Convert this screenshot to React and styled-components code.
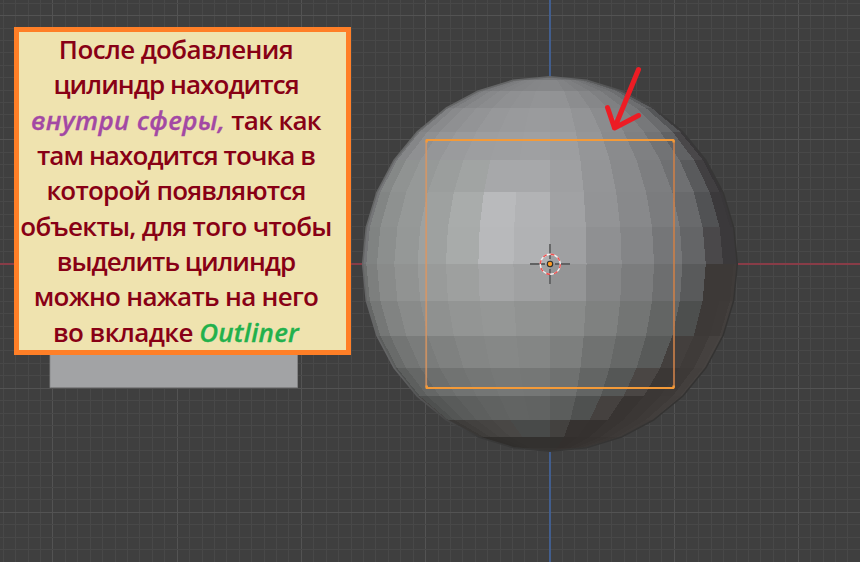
import React from "react";
import styled, { createGlobalStyle } from "styled-components";

const GlobalStyle = createGlobalStyle`
  *, *::before, *::after { box-sizing: border-box; }
  html, body { margin: 0; padding: 0; background: #3f3f3f; }
`;

const Viewport = styled.main`
  position: relative;
  width: 860px;
  height: 562px;
  padding: 27px 0 0 14px;
  overflow: hidden;
  background: #3f3f3f;
`;

const Scene = styled.svg`
  position: absolute;
  inset: 0;
  width: 860px;
  height: 562px;
  display: block;
`;

const NoteCard = styled.section`
  position: relative;
  display: flex;
  flex-direction: column;
  width: 337px;
  height: 328px;
  padding: 0 13px 0 0;
  border: 5px solid #ff7f27;
  background: #efe3af;
  color: #880015;
  font-family: "Open Sans", "Noto Sans", sans-serif;
  font-size: 26px;
  font-weight: 600;
`;

const NoteLine = styled.div`
  display: flex;
  justify-content: center;
  height: 35.5px;
  line-height: 34.6px;
  white-space: pre;
  letter-spacing: ${(p) => p.$tracking || 0}px;
`;

const Accent = styled.em`
  color: ${(p) => p.$color};
  font-style: italic;
  font-weight: 600;
  letter-spacing: ${(p) => p.$tracking || 0}px;
  -webkit-text-stroke: 0.3px currentColor;
`;

const CX = 550;
const CY = 264;
const R = 187.3;
const STEP = Math.PI / 16;

const SHADES = [
  "5f 66 6c 70 74 76 78 79 78 76 73 70 6c 66 5c 4e",
  "68 74 7a 7e 82 84 86 87 87 83 7f 7a 74 6d 60 50",
  "70 7a 82 88 8c 90 92 94 93 8d 87 80 78 6e 5f 4c",
  "74 82 8a 90 94 98 9a 9b 9a 94 8c 82 78 6b 56 40",
  "76 86 90 96 9b 9e 9f a0 9e 96 8b 80 73 62 48 38",
  "78 87 92 98 9d a3 a8 a8 a0 95 8a 7e 70 5a 40 36",
  "76 84 90 98 a0 ab ba b3 a2 94 89 7c 6a 52 3a 38",
  "74 82 8e 97 a0 aa b9 b2 a0 90 85 76 65 49 3a 3a",
  "6e 7e 8a 92 9a 9f a6 a1 95 86 7c 6e 5a 3a 3a 3c",
  "66 76 82 8a 90 94 96 92 8a 80 74 64 4e 3a 3b 40",
  "5c 6a 74 7b 80 85 87 85 7e 71 67 59 40 3c 42 44",
  "50 5e 66 6d 72 75 77 76 70 64 56 47 38 3a 40 43",
  "44 4f 55 5a 5e 61 63 62 5c 50 42 35 38 3b 3f 41",
  "34 38 3d 41 44 47 49 49 41 33 32 35 38 3a 3c 3e",
  "2d 2d 2e 2f 30 31 31 31 30 30 31 33 35 37 39 3a",
  "34 34 34 34 34 34 34 34 33 33 34 35 37 38 39 3a",
].map((row) => row.split(" ").map((v) => parseInt(v, 16)));

const faceColor = (v, row, col) => {
  if (row < 8) {
    if (v < 0x50) return `rgb(${v + 1},${v - 1},${v + 1})`;
    if (row >= 5 && col > 0 && col < 6) return `rgb(${v - 2},${v + 1},${v})`;
    return `rgb(${v - 1},${v},${v + 2})`;
  }
  if (v < 0x48 && row > 11 && col < 9) return `rgb(${v + 2},${v},${v - 2})`;
  if (v < 0x48) return `rgb(${v + 3},${v - 1},${v - 3})`;
  if (row === 8 && col > 5) return `rgb(${v - 1},${v},${v + 1})`;
  return `rgb(${v - 1},${v + 1},${v})`;
};

const vertex = (ring, seg) => {
  const polar = ring * STEP;
  const x = CX - R * Math.sin(polar) * Math.cos(seg * STEP);
  const y = CY - R * Math.cos(polar);
  return `${x.toFixed(2)},${y.toFixed(2)}`;
};

const faces = SHADES.flatMap((shades, row) =>
  shades.map((v, col) => ({
    key: `${row}-${col}`,
    points: [vertex(row, col), vertex(row, col + 1), vertex(row + 1, col + 1), vertex(row + 1, col)].join(" "),
    color: faceColor(v, row, col),
  }))
);

const silhouette = [
  ...Array.from({ length: 17 }, (_, i) => vertex(i, 0)),
  ...Array.from({ length: 17 }, (_, i) => vertex(16 - i, 16)),
].join(" ");

const GRID = 12.42;
const columns = Array.from({ length: 70 }, (_, i) => i - 44);
const rows = Array.from({ length: 46 }, (_, i) => i - 21);

function Grid() {
  const line = (i, vertical) => {
    const offset = vertical ? 0.7 : 0.5;
    const p = Math.round((vertical ? CX : CY) + i * GRID - offset) + 0.5;
    const major = i % 10 === 0;
    return (
      <line
        key={`${vertical ? "v" : "h"}${i}`}
        x1={vertical ? p : 0}
        x2={vertical ? p : 860}
        y1={vertical ? 0 : p}
        y2={vertical ? 562 : p}
        stroke={major ? "#535353" : "#484848"}
      />
    );
  };
  const minorFirst = (a, b) => (a % 10 === 0) - (b % 10 === 0);
  return (
    <g>
      {[...columns].sort(minorFirst).map((i) => line(i, true))}
      {[...rows].sort(minorFirst).map((i) => line(i, false))}
    </g>
  );
}

function Sphere() {
  return (
    <g>
      <g shapeRendering="crispEdges">
        {faces.map((f) => (
          <polygon key={f.key} points={f.points} fill={f.color} />
        ))}
      </g>
      <polygon points={silhouette} fill="none" stroke="url(#rim)" strokeWidth="1.6" strokeLinejoin="round" />
    </g>
  );
}

function CylinderOutline() {
  return (
    <g fill="none">
      <path d="M426.2 141V387" stroke="#dd965f" strokeWidth="1.8" opacity="0.8" />
      <path d="M674 141V387" stroke="#cb8049" strokeWidth="1.8" opacity="0.9" />
      <path d="M426.5 140H673.5M426.5 388H673.5" stroke="#f49a38" strokeWidth="2" strokeLinecap="round" />
      <path d="M426.7 140v2.6M673.6 140v2.6M426.7 385.4v2.6M673.6 385.4v2.6" stroke="#f49a38" strokeWidth="2.4" />
    </g>
  );
}

function Cursor3D() {
  return (
    <g fill="none">
      <path d="M530 264H545M555 264H570M550 244V259M550 269V284" stroke="#616263" strokeWidth="1.8" />
      <circle cx="550.3" cy="264.3" r="10" stroke="#f4f0f0" strokeWidth="1.4" />
      <circle cx="550.3" cy="264.3" r="10" stroke="#f0504f" strokeWidth="1.4" strokeDasharray="3.927" />
      <circle cx="550" cy="264" r="2.7" fill="#ff9c22" stroke="#30302f" strokeWidth="1.1" />
    </g>
  );
}

export default function App() {
  return (
    <>
      <GlobalStyle />
      <Viewport>
        <Scene viewBox="0 0 860 562" aria-hidden="true">
          <defs>
            <linearGradient id="rim" x1="0" y1="0" x2="1" y2="0.6">
              <stop offset="0" stopColor="#666767" />
              <stop offset="0.4" stopColor="#646566" />
              <stop offset="0.65" stopColor="#393939" />
              <stop offset="1" stopColor="#343332" />
            </linearGradient>
          </defs>
          <Grid />
          <path d="M0 264H860" stroke="#883c47" strokeWidth="1.8" />
          <path d="M550 0V562" stroke="#426196" strokeWidth="1.8" />
          <rect x="50" y="139" width="247.5" height="248.5" fill="#a2a3a5" stroke="#858687" strokeWidth="0.8" />
          <Sphere />
          <CylinderOutline />
          <Cursor3D />
          <path
            d="M638.5 69.5L614.5 128M607.5 107.5L614.5 128L638.5 115.5"
            fill="none"
            stroke="#ed1c24"
            strokeWidth="5"
            strokeLinecap="round"
            strokeLinejoin="round"
          />
        </Scene>
        <NoteCard>
          <NoteLine $tracking={-0.62}>После добавления</NoteLine>
          <NoteLine $tracking={-0.93}>цилиндр находится</NoteLine>
          <NoteLine $tracking={-0.7}><Accent $color="#a349a4" $tracking={0.33}>внутри сферы,</Accent> так как</NoteLine>
          <NoteLine $tracking={-0.91}>там находится точка в</NoteLine>
          <NoteLine $tracking={-0.78}>которой появляются</NoteLine>
          <NoteLine $tracking={-0.7}>объекты, для того чтобы</NoteLine>
          <NoteLine $tracking={-1}>выделить цилиндр</NoteLine>
          <NoteLine $tracking={-0.7}>можно нажать на него</NoteLine>
          <NoteLine $tracking={-0.55}>во вкладке <Accent $color="#22b14c" $tracking={0.25}>Outliner</Accent></NoteLine>
        </NoteCard>
      </Viewport>
    </>
  );
}
